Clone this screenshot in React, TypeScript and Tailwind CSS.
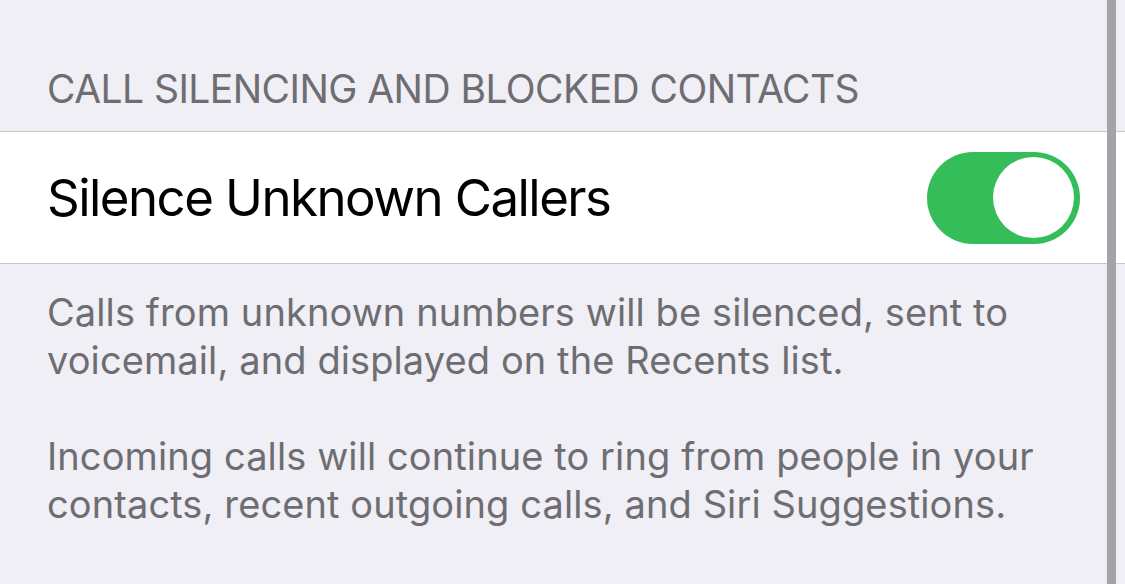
import React from "react";

export default function App() {
  return (
    <div
      className="relative w-[1125px] h-[584px] overflow-hidden bg-[#f0eff5]"
      style={{ fontFamily: "Inter, 'Noto Sans', sans-serif" }}
    >
      <div className="h-[131px] flex items-end pl-[47px] pb-[23px]">
        <span className="text-[39px] leading-[39px] text-[#6d6d72] tracking-[-0.55px]">
          CALL SILENCING AND BLOCKED CONTACTS
        </span>
      </div>
      <div className="h-[133px] bg-white border-y border-[#c8c7cc] flex items-center justify-between pl-[47px] pr-[45px]">
        <span className="text-[51px] leading-[51px] text-black tracking-[-1.55px]">Silence Unknown Callers</span>
        <div className="w-[153px] h-[92px] rounded-full bg-[#34bd58] flex items-center justify-end pr-[6px]">
          <div className="w-[81px] h-[81px] rounded-full bg-white" />
        </div>
      </div>
      <div className="pl-[47px] pr-[60px] pt-[24px] text-[38px] leading-[48px] text-[#6d6d72] tracking-[0.1px]">
        <p>
          Calls from unknown numbers will be silenced, sent to
          <br />
          voicemail, and displayed on the Recents list.
        </p>
        <p className="mt-[48px]">
          Incoming calls will continue to ring from people in your
          <br />
          contacts, recent outgoing calls, and Siri Suggestions.
        </p>
      </div>
      <div className="absolute top-0 left-[1107px] w-[9px] h-full bg-[#a4a3a8]" />
    </div>
  );
}
